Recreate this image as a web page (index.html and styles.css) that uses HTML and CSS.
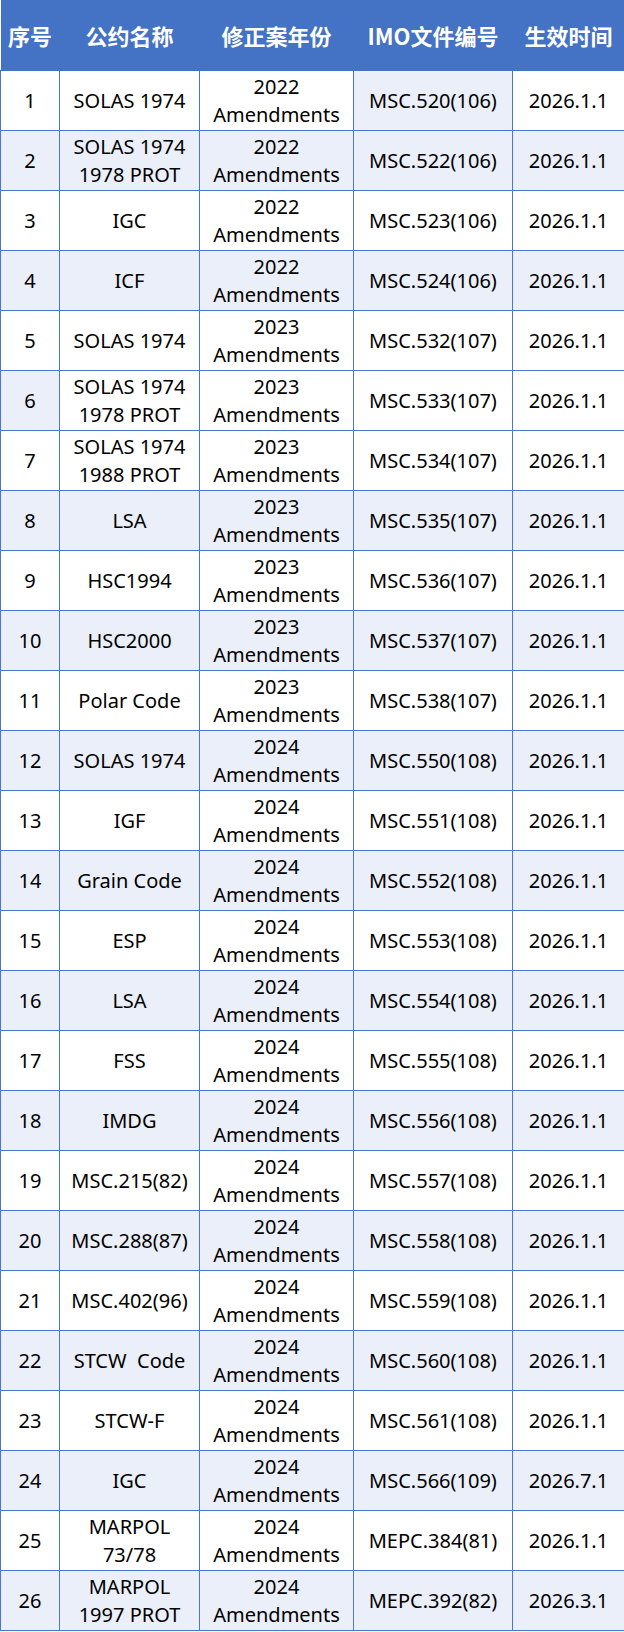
FILE: index.html
```html
<!DOCTYPE html>
<html lang="zh-CN">
<head>
<meta charset="utf-8">
<title>IMO 公约修正案生效时间</title>
<link rel="stylesheet" href="styles.css">
</head>
<body>
<table class="tbl">
  <colgroup>
    <col class="c1"><col class="c2"><col class="c3"><col class="c4"><col class="c5">
  </colgroup>
  <thead>
    <tr class="head"><th>序号</th><th>公约名称</th><th>修正案年份</th><th>IMO文件编号</th><th>生效时间</th></tr>
  </thead>
  <tbody>
    <tr><td>1</td><td>SOLAS 1974</td><td>2022<br>Amendments</td><td class="shade">MSC.520(106)</td><td>2026.1.1</td></tr>
    <tr class="alt"><td>2</td><td>SOLAS 1974<br>1978 PROT</td><td>2022<br>Amendments</td><td>MSC.522(106)</td><td>2026.1.1</td></tr>
    <tr><td>3</td><td>IGC</td><td>2022<br>Amendments</td><td>MSC.523(106)</td><td>2026.1.1</td></tr>
    <tr class="alt"><td>4</td><td>ICF</td><td>2022<br>Amendments</td><td>MSC.524(106)</td><td>2026.1.1</td></tr>
    <tr><td>5</td><td>SOLAS 1974</td><td>2023<br>Amendments</td><td>MSC.532(107)</td><td>2026.1.1</td></tr>
    <tr><td class="shade">6</td><td>SOLAS 1974<br>1978 PROT</td><td>2023<br>Amendments</td><td>MSC.533(107)</td><td>2026.1.1</td></tr>
    <tr><td>7</td><td>SOLAS 1974<br>1988 PROT</td><td>2023<br>Amendments</td><td>MSC.534(107)</td><td>2026.1.1</td></tr>
    <tr class="alt"><td>8</td><td>LSA</td><td>2023<br>Amendments</td><td>MSC.535(107)</td><td>2026.1.1</td></tr>
    <tr><td>9</td><td>HSC1994</td><td>2023<br>Amendments</td><td>MSC.536(107)</td><td>2026.1.1</td></tr>
    <tr class="alt"><td>10</td><td>HSC2000</td><td>2023<br>Amendments</td><td>MSC.537(107)</td><td>2026.1.1</td></tr>
    <tr><td>11</td><td>Polar Code</td><td>2023<br>Amendments</td><td>MSC.538(107)</td><td>2026.1.1</td></tr>
    <tr class="alt"><td>12</td><td>SOLAS 1974</td><td>2024<br>Amendments</td><td>MSC.550(108)</td><td>2026.1.1</td></tr>
    <tr><td>13</td><td>IGF</td><td>2024<br>Amendments</td><td>MSC.551(108)</td><td>2026.1.1</td></tr>
    <tr class="alt"><td>14</td><td>Grain Code</td><td>2024<br>Amendments</td><td>MSC.552(108)</td><td>2026.1.1</td></tr>
    <tr><td>15</td><td>ESP</td><td>2024<br>Amendments</td><td>MSC.553(108)</td><td>2026.1.1</td></tr>
    <tr class="alt"><td>16</td><td>LSA</td><td>2024<br>Amendments</td><td>MSC.554(108)</td><td>2026.1.1</td></tr>
    <tr><td>17</td><td>FSS</td><td>2024<br>Amendments</td><td>MSC.555(108)</td><td>2026.1.1</td></tr>
    <tr class="alt"><td>18</td><td>IMDG</td><td>2024<br>Amendments</td><td>MSC.556(108)</td><td>2026.1.1</td></tr>
    <tr><td>19</td><td>MSC.215(82)</td><td>2024<br>Amendments</td><td>MSC.557(108)</td><td>2026.1.1</td></tr>
    <tr class="alt"><td>20</td><td>MSC.288(87)</td><td>2024<br>Amendments</td><td>MSC.558(108)</td><td>2026.1.1</td></tr>
    <tr><td>21</td><td>MSC.402(96)</td><td>2024<br>Amendments</td><td>MSC.559(108)</td><td>2026.1.1</td></tr>
    <tr class="alt"><td>22</td><td>STCW&nbsp; Code</td><td>2024<br>Amendments</td><td>MSC.560(108)</td><td>2026.1.1</td></tr>
    <tr><td>23</td><td>STCW-F</td><td>2024<br>Amendments</td><td>MSC.561(108)</td><td>2026.1.1</td></tr>
    <tr class="alt"><td>24</td><td>IGC</td><td>2024<br>Amendments</td><td>MSC.566(109)</td><td>2026.7.1</td></tr>
    <tr><td>25</td><td>MARPOL<br>73/78</td><td>2024<br>Amendments</td><td>MEPC.384(81)</td><td>2026.1.1</td></tr>
    <tr class="alt"><td>26</td><td>MARPOL<br>1997 PROT</td><td>2024<br>Amendments</td><td>MEPC.392(82)</td><td>2026.3.1</td></tr>
  </tbody>
</table>
</body>
</html>
```
FILE: styles.css
```css
html, body {
  margin: 0;
  padding: 0;
  background: #ffffff;
}
.tbl {
  width: 624px;
  border-collapse: collapse;
  table-layout: fixed;
  font-family: "Noto Sans", "Noto Sans CJK SC", sans-serif;
  font-size: 20px;
  color: #000;
}
.c1 { width: 59px; }
.c2 { width: 140px; }
.c3 { width: 154px; }
.c4 { width: 159px; }
.c5 { width: 112px; }
.head th {
  height: 70px;
  padding: 0;
  background: #4472c4;
  color: #fff;
  font-family: "Noto Sans CJK SC", sans-serif;
  font-weight: 700;
  font-size: 22px;
  text-align: center;
  vertical-align: middle;
  border-bottom: 1px solid #4472c4;
  white-space: nowrap;
}
.tbl td {
  height: 59px;
  padding: 0;
  text-align: center;
  vertical-align: middle;
  line-height: 28px;
  border: 1px solid #4a78d0;
  white-space: nowrap;
}
.alt td,
.tbl td.shade {
  background: #eaeff9;
}
```
